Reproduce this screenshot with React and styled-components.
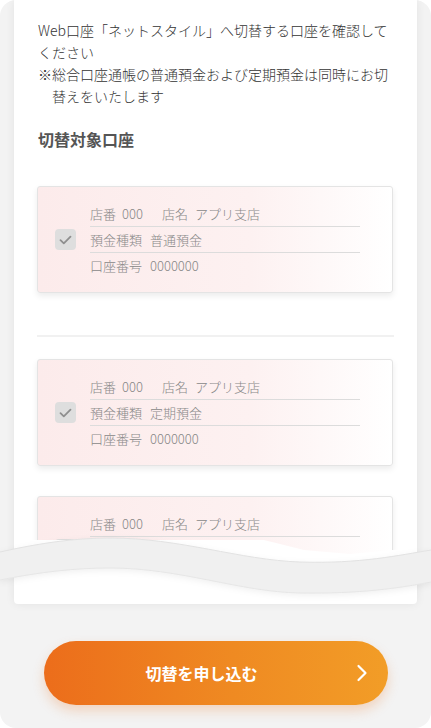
import React from 'react'
import styled, { createGlobalStyle } from 'styled-components'

const GlobalStyle = createGlobalStyle`
  html, body {
    margin: 0;
    padding: 0;
    background: #fff;
  }
  body {
    font-family: "Noto Sans CJK JP", "Noto Sans", sans-serif;
  }
`

const Frame = styled.div`
  position: relative;
  width: 431px;
  height: 728px;
  border-radius: 16px;
  background: #f3f3f3;
  overflow: hidden;
  display: flex;
  flex-direction: column;
`

const Panel = styled.div`
  margin: 0 14px;
  height: 604px;
  flex: none;
  background: #fff;
  border-radius: 0 0 4px 4px;
  box-shadow: 0 0 10px rgba(0, 0, 0, 0.07);
  overflow: hidden;
`

// list is cut off just under the wave that lies over it
const Content = styled.div`
  height: 100%;
  overflow: hidden;
  padding: 19px 24px 0;
  box-sizing: border-box;
  clip-path: polygon(0 0, 403px 0, 403px 548px, 379px 550px, 336px 554px, 290px 550px, 250px 540px, 0 540px);
`

const Intro = styled.p`
  margin: 0;
  font-size: 14px;
  line-height: 22px;
  font-weight: 300;
  color: #333;
`

const Note = styled(Intro)`
  padding-left: 1em;
  text-indent: -1em;
`

const Heading = styled.h2`
  margin: 20px 0 0;
  font-size: 16px;
  line-height: 24px;
  font-weight: 700;
  color: #555;
`

const AccountCard = styled.div`
  display: flex;
  align-items: center;
  gap: 14px;
  margin-top: ${p => p.$top}px;
  margin-left: -1px;
  padding: 14px 32px 14px 17px;
  border: 1px solid #e4e4e4;
  border-radius: 3px;
  background: linear-gradient(90deg, #fcebeb 0%, #fdf1f1 60%, #ffffff 100%);
  box-shadow: 0 3px 6px rgba(0, 0, 0, 0.08);
`

const Check = styled.div`
  flex: none;
  width: 21px;
  height: 21px;
  border-radius: 4px;
  background: #dedede;
  display: flex;
  align-items: center;
  justify-content: center;
`

const Rows = styled.div`
  flex: 1;
  display: flex;
  flex-direction: column;
`

const Row = styled.div`
  display: flex;
  align-items: center;
  height: 25px;
  font-size: 13px;
  font-weight: 300;
  color: #888;
  border-top: ${p => (p.$first ? 'none' : '1px solid #dcdcdc')};
`

const Label = styled.span`
  margin-right: ${p => p.$gap || 8}px;
  white-space: nowrap;
`

const Divider = styled.div`
  height: 2px;
  margin: 42px -1px 0;
  background: #f1f1f1;
`

const Wave = styled.svg`
  position: absolute;
  left: 0;
  top: 530px;
  width: 431px;
  height: 72px;
  filter: drop-shadow(0 2px 3px rgba(0, 0, 0, 0.06));
`

const ButtonArea = styled.div`
  flex: 1;
  display: flex;
  align-items: flex-start;
  justify-content: center;
  padding-top: 37px;
`

const ApplyButton = styled.button`
  width: 344px;
  height: 64px;
  border: none;
  border-radius: 32px;
  background: linear-gradient(90deg, #ec6d1b 0%, #ef8a22 55%, #f29d27 100%);
  box-shadow: 0 6px 12px rgba(236, 120, 40, 0.25);
  display: flex;
  align-items: center;
  padding: 0 16px 0 8px;
  font-family: inherit;
  cursor: pointer;
`

const ButtonText = styled.span`
  flex: 1;
  text-align: center;
  color: #fff;
  font-size: 16px;
  font-weight: 700;
`

const Arrow = styled.span`
  width: 20px;
  display: flex;
  justify-content: center;
`

const accounts = [
  { type: '普通預金', top: 35 },
  { type: '定期預金', top: 22 },
  { type: '普通預金', top: 30 },
]

function Account({ type, top }) {
  return (
    <AccountCard $top={top}>
      <Check>
        <svg width="13" height="10" viewBox="0 0 13 10">
          <path d="M1.5 5.2 L4.8 8.3 L11.5 1.6" fill="none" stroke="#8f8f8f" strokeWidth="1.8" strokeLinecap="round" strokeLinejoin="round" />
        </svg>
      </Check>
      <Rows>
        <Row $first>
          <Label $gap={6}>店番</Label>
          <Label $gap={19}>000</Label>
          <Label $gap={7}>店名</Label>
          <Label>アプリ支店</Label>
        </Row>
        <Row>
          <Label>預金種類</Label>
          <Label>{type}</Label>
        </Row>
        <Row>
          <Label>口座番号</Label>
          <Label>0000000</Label>
        </Row>
      </Rows>
    </AccountCard>
  )
}

export default function App() {
  return (
    <Frame>
      <GlobalStyle />
      <Panel>
        <Content>
          <Intro>Web口座「ネットスタイル」へ切替する口座を確認してください</Intro>
          <Note>※総合口座通帳の普通預金および定期預金は同時にお切替えをいたします</Note>
          <Heading>切替対象口座</Heading>
          {accounts.map((a, i) => (
            <React.Fragment key={i}>
              <Account {...a} />
              {i === 0 && <Divider />}
            </React.Fragment>
          ))}
        </Content>
      </Panel>
      <Wave viewBox="0 0 431 72">
        <path
          d="M0 22 C40 13 75 8 110 8 C180 8 240 30 300 32 C360 34 400 25 431 20 L431 52 C400 58 360 64 300 63 C240 62 180 38 110 38 C75 38 40 42 0 50 Z"
          fill="#f0f0f0"
        />
        <path d="M0 22 C40 13 75 8 110 8 C180 8 240 30 300 32 C360 34 400 25 431 20" fill="none" stroke="#e2e2e2" strokeWidth="1" />
        <path d="M431 52 C400 58 360 64 300 63 C240 62 180 38 110 38 C75 38 40 42 0 50" fill="none" stroke="#e6e6e6" strokeWidth="1" />
      </Wave>
      <ButtonArea>
        <ApplyButton>
          <ButtonText>切替を申し込む</ButtonText>
          <Arrow>
            <svg width="12" height="18" viewBox="0 0 12 18">
              <path d="M2.5 2 L9.5 9 L2.5 16" fill="none" stroke="#fff" strokeWidth="2.2" strokeLinecap="round" strokeLinejoin="round" />
            </svg>
          </Arrow>
        </ApplyButton>
      </ButtonArea>
    </Frame>
  )
}
